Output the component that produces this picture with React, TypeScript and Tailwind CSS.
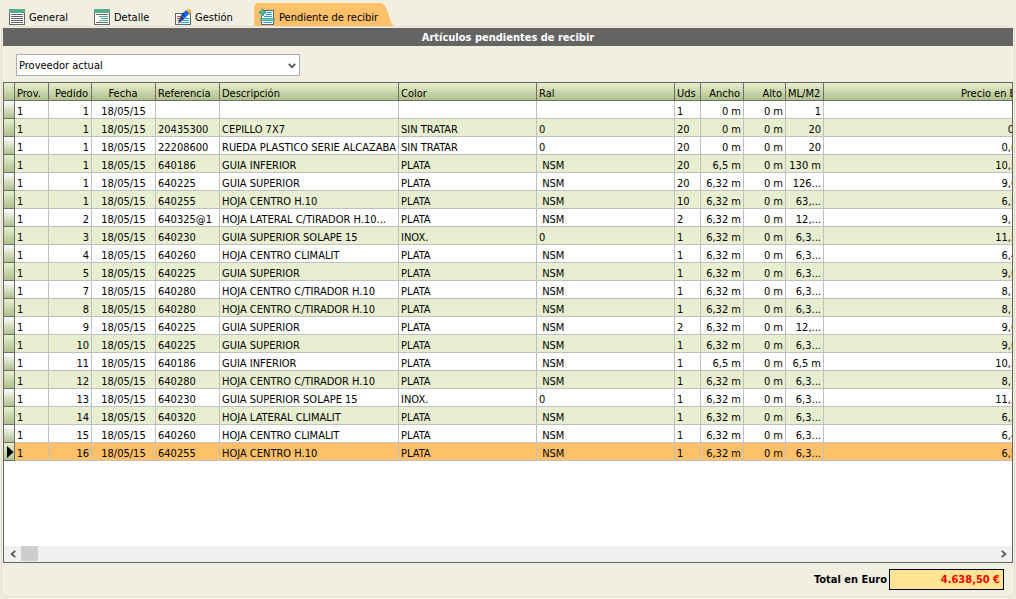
import { useState, type ReactNode } from 'react';

type Row = [
  pedido: number,
  referencia: string,
  descripcion: string,
  color: string,
  ral: string,
  uds: number,
  ancho: string,
  ml: string,
  precio: string,
];

const rows: Row[] = [
  [1, '', '', '', '', 1, '0 m', '1', ''],
  [1, '20435300', 'CEPILLO 7X7', 'SIN TRATAR', '0', 20, '0 m', '20', '0,6 €'],
  [1, '22208600', 'RUEDA PLASTICO SERIE ALCAZABA', 'SIN TRATAR', '0', 20, '0 m', '20', '0,65 €'],
  [1, '640186', 'GUIA INFERIOR', 'PLATA', ' NSM', 20, '6,5 m', '130 m', '10,55 €'],
  [1, '640225', 'GUIA SUPERIOR', 'PLATA', ' NSM', 20, '6,32 m', '126...', '9,06 €'],
  [1, '640255', 'HOJA CENTRO H.10', 'PLATA', ' NSM', 10, '6,32 m', '63,...', '6,56 €'],
  [2, '640325@1', 'HOJA LATERAL C/TIRADOR H.10...', 'PLATA', ' NSM', 2, '6,32 m', '12,...', '9,14 €'],
  [3, '640230', 'GUIA SUPERIOR SOLAPE 15', 'INOX.', '0', 1, '6,32 m', '6,3...', '11,54 €'],
  [4, '640260', 'HOJA CENTRO CLIMALIT', 'PLATA', ' NSM', 1, '6,32 m', '6,3...', '6,44 €'],
  [5, '640225', 'GUIA SUPERIOR', 'PLATA', ' NSM', 1, '6,32 m', '6,3...', '9,06 €'],
  [7, '640280', 'HOJA CENTRO C/TIRADOR H.10', 'PLATA', ' NSM', 1, '6,32 m', '6,3...', '8,73 €'],
  [8, '640280', 'HOJA CENTRO C/TIRADOR H.10', 'PLATA', ' NSM', 1, '6,32 m', '6,3...', '8,73 €'],
  [9, '640225', 'GUIA SUPERIOR', 'PLATA', ' NSM', 2, '6,32 m', '12,...', '9,06 €'],
  [10, '640225', 'GUIA SUPERIOR', 'PLATA', ' NSM', 1, '6,32 m', '6,3...', '9,06 €'],
  [11, '640186', 'GUIA INFERIOR', 'PLATA', ' NSM', 1, '6,5 m', '6,5 m', '10,55 €'],
  [12, '640280', 'HOJA CENTRO C/TIRADOR H.10', 'PLATA', ' NSM', 1, '6,32 m', '6,3...', '8,73 €'],
  [13, '640230', 'GUIA SUPERIOR SOLAPE 15', 'INOX.', '0', 1, '6,32 m', '6,3...', '11,54 €'],
  [14, '640320', 'HOJA LATERAL CLIMALIT', 'PLATA', ' NSM', 1, '6,32 m', '6,3...', '6,26 €'],
  [15, '640260', 'HOJA CENTRO CLIMALIT', 'PLATA', ' NSM', 1, '6,32 m', '6,3...', '6,44 €'],
  [16, '640255', 'HOJA CENTRO H.10', 'PLATA', ' NSM', 1, '6,32 m', '6,3...', '6,56 €'],
];

const columns = [
  { title: 'Prov.', width: 'w-[34px]', align: 'text-left' },
  { title: 'Pedido', width: 'w-[43px]', align: 'text-right' },
  { title: 'Fecha', width: 'w-[64px]', align: 'text-center' },
  { title: 'Referencia', width: 'w-[64px]', align: 'text-left' },
  { title: 'Descripción', width: 'w-[179px]', align: 'text-left' },
  { title: 'Color', width: 'w-[138px]', align: 'text-left' },
  { title: 'Ral', width: 'w-[138px]', align: 'text-left' },
  { title: 'Uds', width: 'w-[26px]', align: 'text-left' },
  { title: 'Ancho', width: 'w-[43px]', align: 'text-right' },
  { title: 'Alto', width: 'w-[42px]', align: 'text-right' },
  { title: 'ML/M2', width: 'w-[38px]', align: 'text-right' },
  { title: 'Precio en Euro', width: 'w-[212px]', align: 'text-right' },
];

function GeneralIcon() {
  return (
    <svg width="16" height="16" viewBox="0 0 16 16" shapeRendering="crispEdges">
      <path d="M0 4h16v12H0z" fill="#646464" />
      <path d="M1 4h14v11H1z" fill="#fff" />
      <path d="M0 0h16v4H0z" fill="#55ab8b" />
      <path d="M2 5h12v1H2zM2 7h12v1H2zM2 9h12v1H2zM2 11h12v1H2zM2 13h12v1H2z" fill="#646464" />
    </svg>
  );
}

function DetalleIcon() {
  return (
    <svg width="16" height="16" viewBox="0 0 16 16" shapeRendering="crispEdges">
      <path d="M0 4h16v12H0z" fill="#646464" />
      <path d="M1 4h14v11H1z" fill="#fff" />
      <path d="M0 0h16v4H0z" fill="#55ab8b" />
      <path d="M2 5h12v1H2zM2 13h12v1H2z" fill="#646464" />
      <path d="M5 7h9v1H5zM7 9h7v1H7zM5 11h9v1H5z" fill="#55ab8b" />
    </svg>
  );
}

function GestionIcon() {
  return (
    <svg width="16" height="16" viewBox="0 0 16 16">
      <g shapeRendering="crispEdges">
        <path d="M0 4h16v12H0z" fill="#646464" />
        <path d="M1 5h14v10H1z" fill="#fff" />
        <path d="M2 7h5v1H2zM2 9h3v1H2z" fill="#e8402a" />
        <path d="M10 9h4v1h-4zM8 11h6v1H8zM6 13h8v1H6zM2 11h2v1H2z" fill="#19a7e8" />
      </g>
      <path d="M3 14.5 4.5 10 7 12z" fill="#2b2b50" />
      <path d="M4.500 10 6.400 6.500 9.500 9.500 7 12z" fill="#1c3f86" />
      <path d="M6.200 6.400 11 1 14.500 4.400 9.700 9.600z" fill="#1565d8" />
      <path d="M6 6.200 8.500 3.400 9.500 4.300 7 7.200z" fill="#0c2f80" />
      <path d="M12.500.3h2L16 2v2l-1.600.6L11.600 1.500z" fill="#f5a61d" />
    </svg>
  );
}

function PendienteIcon() {
  return (
    <svg width="16" height="16" viewBox="0 0 16 16" shapeRendering="crispEdges">
      <path d="M2 1h13v15H2z" fill="#55628e" />
      <path d="M3 2h11v13H3z" fill="#fff" />
      <path d="M8 3h5v1H8zM7 5h6v1H7zM5 7h8v1H5zM4 13h9v1H4z" fill="#19a0e8" />
      <path d="M1 9h15v3H1z" fill="#55ab8b" />
      <path d="M2 10h13v1H2z" fill="#69c3ea" />
      <path d="M2 0h3v2h2v3H5v2H2V5H0V2h2z" fill="#55ab8b" />
    </svg>
  );
}

function Tab({ icon, label, active, className }: { icon: ReactNode; label: string; active?: boolean; className: string }) {
  return (
    <button type="button" role="tab" aria-selected={!!active} className={`relative flex h-[23px] items-center gap-1 whitespace-nowrap pt-1 ${className}`}>
      {active && (
        <svg className="absolute left-0 top-0" width="140" height="23" viewBox="0 0 140 23" aria-hidden="true">
          <path d="M0 23V5q0-5 5-5h120c5 0 7 4 8.500 8.500l3 9q1 3.500 3.500 5.500z" fill="#ffc06a" />
        </svg>
      )}
      <span className="relative">{icon}</span>
      <span className="relative pt-[2px]">{label}</span>
    </button>
  );
}

export default function App() {
  const [selected, setSelected] = useState(rows.length - 1);

  return (
    <div className="flex min-h-screen flex-col bg-[#f1efe2] font-['DejaVu_Sans_Condensed','DejaVu_Sans',sans-serif] text-[11px] leading-[14px] text-black">
      <div role="tablist" className="flex h-[26px] items-end pl-[9px]">
        <Tab icon={<GeneralIcon />} label="General" className="w-[85px]" />
        <Tab icon={<DetalleIcon />} label="Detalle" className="w-[81px]" />
        <Tab icon={<GestionIcon />} label="Gestión" className="w-[79px]" />
        <Tab icon={<PendienteIcon />} label="Pendiente de recibir" active className="w-[140px] pl-[5px]" />
      </div>

      <main className="mx-px mb-[2px] flex flex-1 flex-col rounded-[4px] border border-[#e4dfc3] p-px">
        <h1 className="bg-[#646464] pb-[1px] pt-[3px] text-center font-bold text-white">Artículos pendientes de recibir</h1>

        <div className="relative ml-[13px] mt-2 w-[284px]">
          <select aria-label="Proveedor" className="block h-[22px] w-full appearance-none border border-[#abadb3] bg-white pb-0 pl-[2px] pr-5 pt-[2px] outline-none">
            <option>Proveedor actual</option>
          </select>
          <svg className="pointer-events-none absolute right-1 top-[9px]" width="8" height="6" viewBox="0 0 8 6" aria-hidden="true">
            <path d="M.8.8 4 4.200 7.200.8" fill="none" stroke="#555" strokeWidth="1.800" />
          </svg>
        </div>

        <section className="mt-[6px] flex flex-1 flex-col overflow-hidden border border-[#646464] bg-white">
          <div className="flex-1 overflow-hidden">
            <table className="w-[1031px] table-fixed border-separate border-spacing-0 whitespace-pre leading-[12px]">
              <colgroup>
                <col className="w-[11px]" />
                {columns.map((c) => (
                  <col key={c.title} className={c.width} />
                ))}
              </colgroup>
              <thead>
                <tr className="h-[18px]">
                  <th className="border-b border-r border-[#6e6e6e] bg-linear-to-b from-[#e8efce] to-[#b1c08c] p-0" />
                  {columns.map((c) => (
                    <th key={c.title} scope="col" className={`border-b border-r border-[#6e6e6e] bg-linear-to-b from-[#e8efce] to-[#b1c08c] pb-0 pl-[2px] pr-[3px] pt-[5px] font-normal ${c.align}`}>
                      {c.title}
                    </th>
                  ))}
                </tr>
              </thead>
              <tbody>
                {rows.map(([pedido, referencia, descripcion, color, ral, uds, ancho, ml, precio], i) => {
                  const current = i === selected;
                  const fill = current ? 'bg-[#ffc06a]' : i % 2 ? 'bg-[#e8efd0]' : 'bg-white';
                  const marker = i % 2 ? 'from-[#e8efd0]' : 'from-white';
                  const cells = ['1', pedido, '18/05/15', referencia, descripcion, color, ral, uds, ancho, '0 m', ml, precio];
                  return (
                    <tr key={pedido + referencia + i} onClick={() => setSelected(i)} className={`h-[18px] ${fill}`}>
                      <td className={`border-b border-r border-[#6e6e6e] bg-linear-to-b to-[#b1c08c] p-0 ${marker}`}>
                        {current && (
                          <svg className="ml-[3px] block" width="7" height="12" viewBox="0 0 7 12" aria-hidden="true">
                            <path d="M0 0 6.500 6 0 12z" />
                          </svg>
                        )}
                      </td>
                      {cells.map((value, j) => (
                        <td key={columns[j].title} className={`overflow-hidden border-b border-r border-[#c0c0c0] pb-0 pl-[2px] pr-[2px] pt-[5px] ${columns[j].align}`}>
                          {value}
                        </td>
                      ))}
                    </tr>
                  );
                })}
              </tbody>
            </table>
          </div>
          <div className="flex h-4 bg-[#f0f0f0]">
            <button type="button" aria-label="Desplazar a la izquierda" className="flex w-[17px] items-center justify-center">
              <svg width="6" height="8" viewBox="0 0 6 8" aria-hidden="true">
                <path d="M5.200.8 1.600 4l3.600 3.200" fill="none" stroke="#555" strokeWidth="1.700" />
              </svg>
            </button>
            <div className="flex-1">
              <div className="h-[15px] w-[17px] bg-[#cdcdcd]" />
            </div>
            <button type="button" aria-label="Desplazar a la derecha" className="flex w-[17px] items-center justify-center">
              <svg width="6" height="8" viewBox="0 0 6 8" aria-hidden="true">
                <path d="M.8.8 4.400 4 .8 7.200" fill="none" stroke="#555" strokeWidth="1.700" />
              </svg>
            </button>
          </div>
        </section>

        <div className="flex items-center justify-end gap-[2px] pb-[5px] pr-[9px] pt-[6px] font-bold">
          <label htmlFor="total">Total en Euro</label>
          <input id="total" readOnly value="4.638,50 €" className="h-[21px] w-[115px] border border-black bg-[#ffe593] px-[3px] text-right text-[#ff0000] outline-none" />
        </div>
      </main>
    </div>
  );
}
